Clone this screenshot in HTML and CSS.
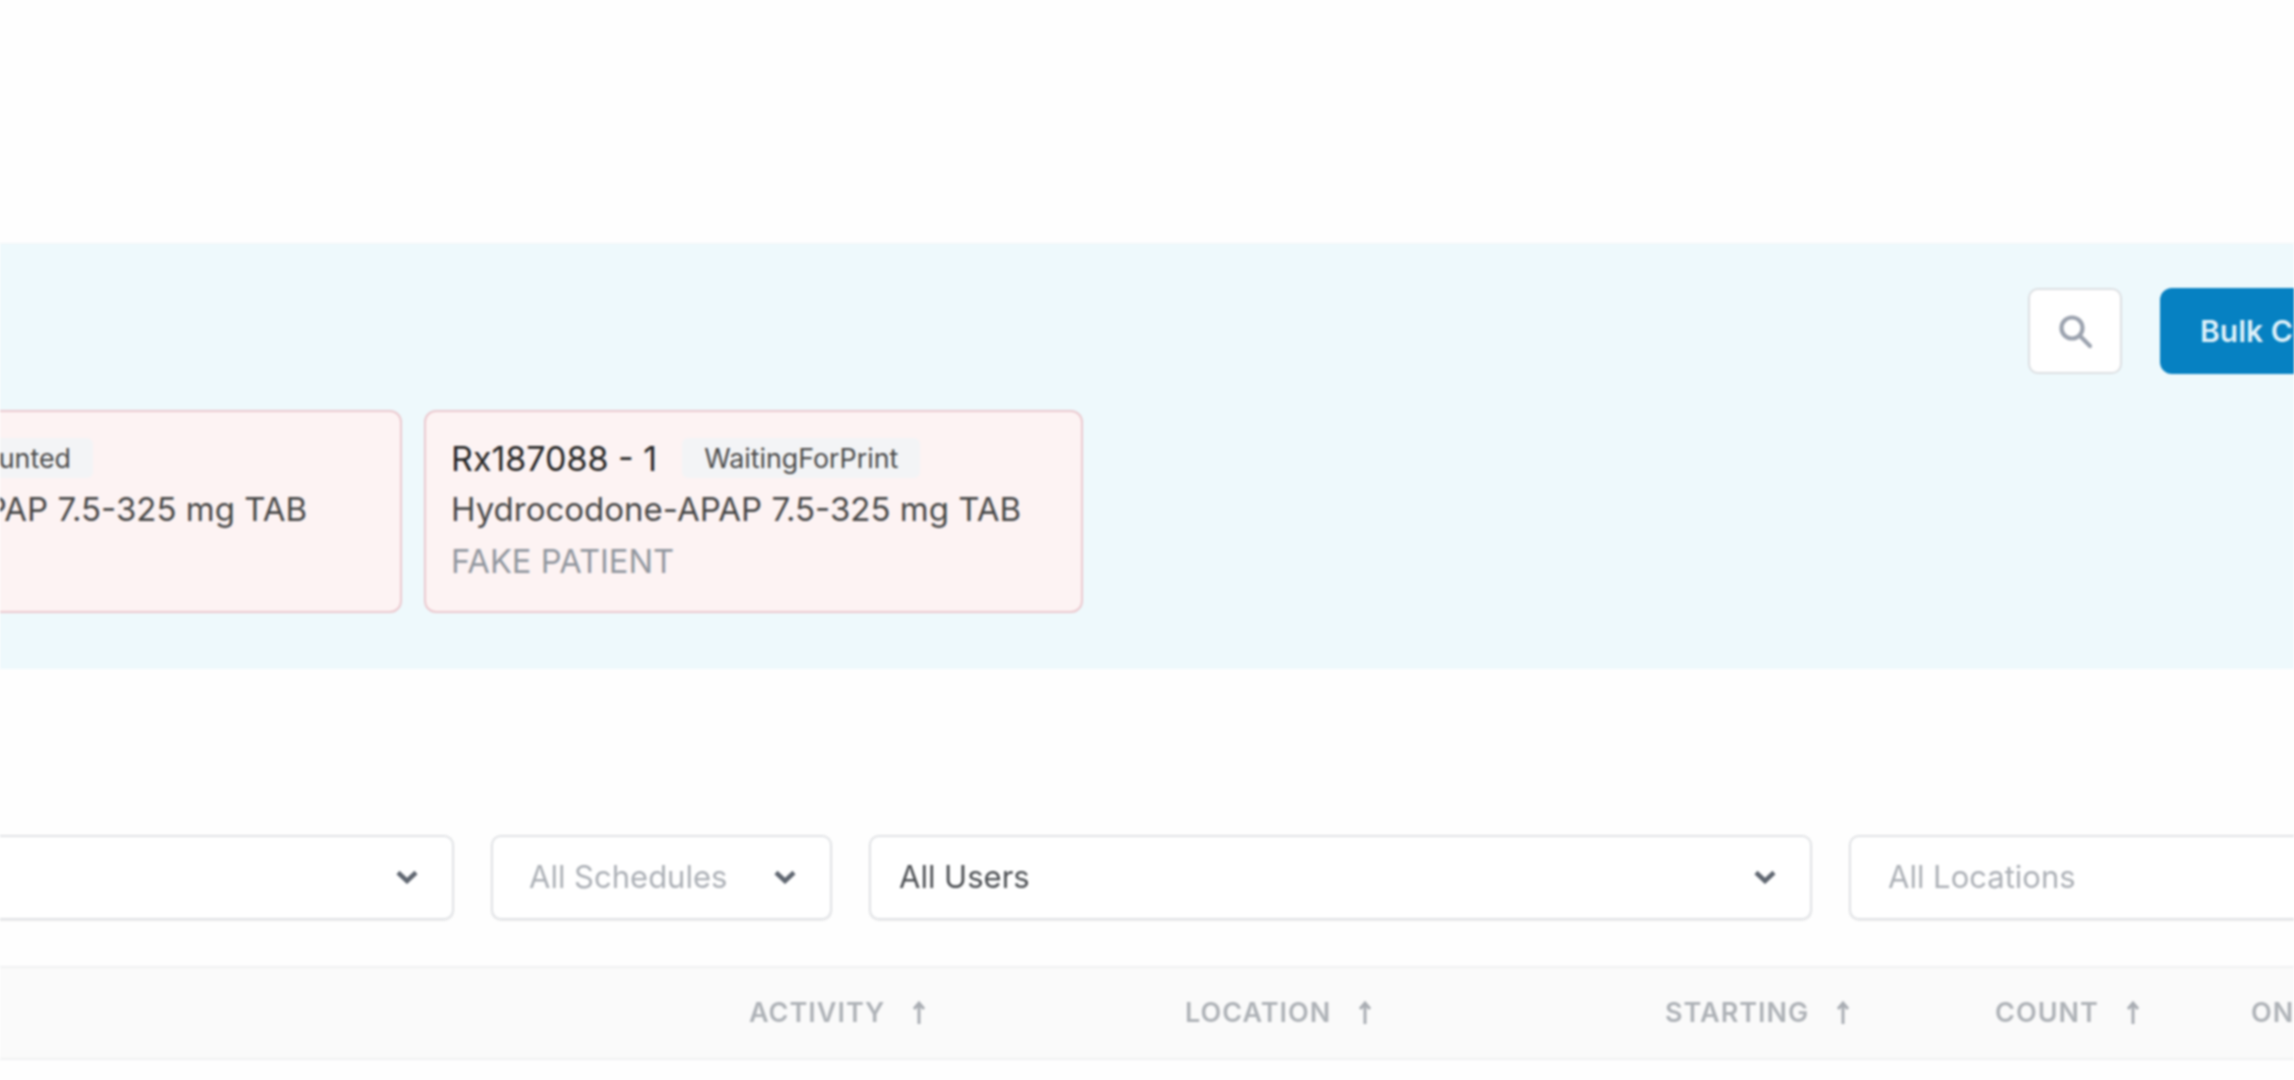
FILE: index.html
```html
<!DOCTYPE html>
<html lang="en">
<head>
<meta charset="utf-8">
<title>Counts</title>
<link rel="stylesheet" href="styles.css">
</head>
<body>
<main class="page">
  <section class="banner">
    <div class="toolbar">
      <button class="icon-btn" aria-label="Search">
        <svg class="search-icon" viewBox="0 0 24 24" fill="none" stroke="#9ca3af" stroke-width="2.8" stroke-linecap="round"><circle cx="10" cy="10" r="7"/><path d="M15.2 15.2 22 22"/></svg>
      </button>
      <button class="primary-btn">Bulk Count</button>
    </div>
    <div class="cards">
      <article class="card card-first">
        <div class="card-head"><span class="rx">Rx18708 - 1</span><span class="pill">Counted</span></div>
        <div class="drug">Hydrocodone-APAP 7.5-325 mg TAB</div>
        <div class="patient">&nbsp;</div>
      </article>
      <article class="card card-second">
        <div class="card-head"><span class="rx">Rx187088 - 1</span><span class="pill">WaitingForPrint</span></div>
        <div class="drug">Hydrocodone-APAP 7.5-325 mg TAB</div>
        <div class="patient">FAKE PATIENT</div>
      </article>
    </div>
  </section>

  <section class="filters">
    <div class="select select-first"><span class="value"></span><svg class="chev" viewBox="0 0 24 14" fill="none" stroke="#5f6670" stroke-width="4.5"><path d="M3 2.5 12 11l9-8.5"/></svg></div>
    <div class="select select-schedules"><span class="value muted">All Schedules</span><svg class="chev" viewBox="0 0 24 14" fill="none" stroke="#5f6670" stroke-width="4.5"><path d="M3 2.5 12 11l9-8.5"/></svg></div>
    <div class="select select-users"><span class="value">All Users</span><svg class="chev" viewBox="0 0 24 14" fill="none" stroke="#5f6670" stroke-width="4.5"><path d="M3 2.5 12 11l9-8.5"/></svg></div>
    <div class="select select-locations"><span class="value muted">All Locations</span></div>
  </section>

  <section class="table-head">
    <div class="th"></div>
    <div class="th">ACTIVITY<svg class="arrow" viewBox="0 0 14 24" fill="none" stroke="#a9adb3" stroke-width="3"><path d="M7 24V3M2 9l5-6 5 6"/></svg></div>
    <div class="th">LOCATION<svg class="arrow" viewBox="0 0 14 24" fill="none" stroke="#a9adb3" stroke-width="3"><path d="M7 24V3M2 9l5-6 5 6"/></svg></div>
    <div class="th">STARTING<svg class="arrow" viewBox="0 0 14 24" fill="none" stroke="#a9adb3" stroke-width="3"><path d="M7 24V3M2 9l5-6 5 6"/></svg></div>
    <div class="th">COUNT<svg class="arrow" viewBox="0 0 14 24" fill="none" stroke="#a9adb3" stroke-width="3"><path d="M7 24V3M2 9l5-6 5 6"/></svg></div>
    <div class="th">ON HAND</div>
  </section>
</main>
</body>
</html>
```

FILE: styles.css
```css
* { box-sizing: border-box; }
html, body { margin: 0; height: 100%; }
body {
  background: #fefefe;
  font-family: Inter, "Liberation Sans", sans-serif;
  overflow: hidden;
}
.page {
  width: 2294px;
  height: 1080px;
  padding-top: 243px;
  overflow: hidden;
  filter: blur(0.8px);
}
.banner {
  height: 426px;
  background: #eef9fc;
  padding-top: 44px;
  border-top: 1px solid #f2f6f7;
  overflow: hidden;
}
.toolbar {
  display: flex;
  justify-content: flex-end;
  gap: 38px;
  height: 86px;
  margin-right: -166px;
}
.icon-btn {
  width: 94px;
  height: 86px;
  background: #fff;
  border: 2px solid #dcdfe2;
  border-radius: 10px;
  display: flex;
  align-items: center;
  justify-content: center;
  padding: 0;
}
.search-icon { width: 36px; height: 36px; }
.primary-btn {
  width: 300px;
  height: 86px;
  background: #0681c2;
  color: #dff1fa;
  border: 0;
  border-radius: 12px;
  font: 600 30px Inter, "Liberation Sans", sans-serif;
  text-align: left;
  padding: 0 0 0 40px;
}
.cards {
  display: flex;
  gap: 22px;
  margin-top: 36px;
  margin-left: -290px;
}
.card {
  height: 203px;
  background: #fdf3f3;
  border: 2px solid #ebc9cf;
  border-radius: 12px;
  padding: 26px 0 0 25px;
  flex: none;
}
.card-first { width: 692px; }
.card-second { width: 659px; }
.card-head { display: flex; align-items: center; gap: 25px; height: 42px; }
.card-first .card-head { gap: 19px; }
.rx { font-size: 34px; color: #262626; line-height: 42px; }
.pill {
  background: #f3f4f6;
  color: #4a4a4a;
  font-size: 26.8px;
  line-height: 40px;
  padding: 0 22px;
  margin-bottom: 3px;
  border-radius: 6px;
}
.drug { font-size: 33px; color: #484848; line-height: 50px; margin-top: 4px; }
.patient { font-size: 32.7px; color: #92979f; line-height: 55px; }

.filters {
  display: flex;
  gap: 37px;
  margin-top: 166px;
  margin-left: -546px;
  height: 85px;
}
.select {
  flex: none;
  height: 85px;
  background: #fff;
  border: 2px solid #e0e2e5;
  border-radius: 10px;
  box-shadow: 0 1px 2px rgba(0, 0, 0, 0.07);
  display: flex;
  align-items: center;
  justify-content: space-between;
  padding: 0 33px 2px 36px;
  font-size: 31px;
}
.select-first { width: 1000px; }
.select-schedules { width: 341px; }
.select-users { width: 943px; padding-left: 28px; }
.select-locations { width: 700px; padding-left: 37px; }
.value { color: #4d5054; }
.value.muted { color: #acb0b6; }
.chev { width: 24px; height: 14px; }

.table-head {
  display: grid;
  grid-template-columns: 749px 436px 480px 330px 256px 200px;
  align-items: center;
  height: 94px;
  margin-top: 46px;
  padding-bottom: 2px;
  background: #fafafa;
  border-top: 2px solid #f0f1f2;
  border-bottom: 2px solid #f0f1f2;
  font-size: 27px;
  font-weight: 600;
  letter-spacing: 1px;
  color: #aeb2b7;
  white-space: nowrap;
  overflow: hidden;
}
.th { display: flex; align-items: center; }
.arrow { width: 14px; height: 24px; margin-left: 27px; }
```
